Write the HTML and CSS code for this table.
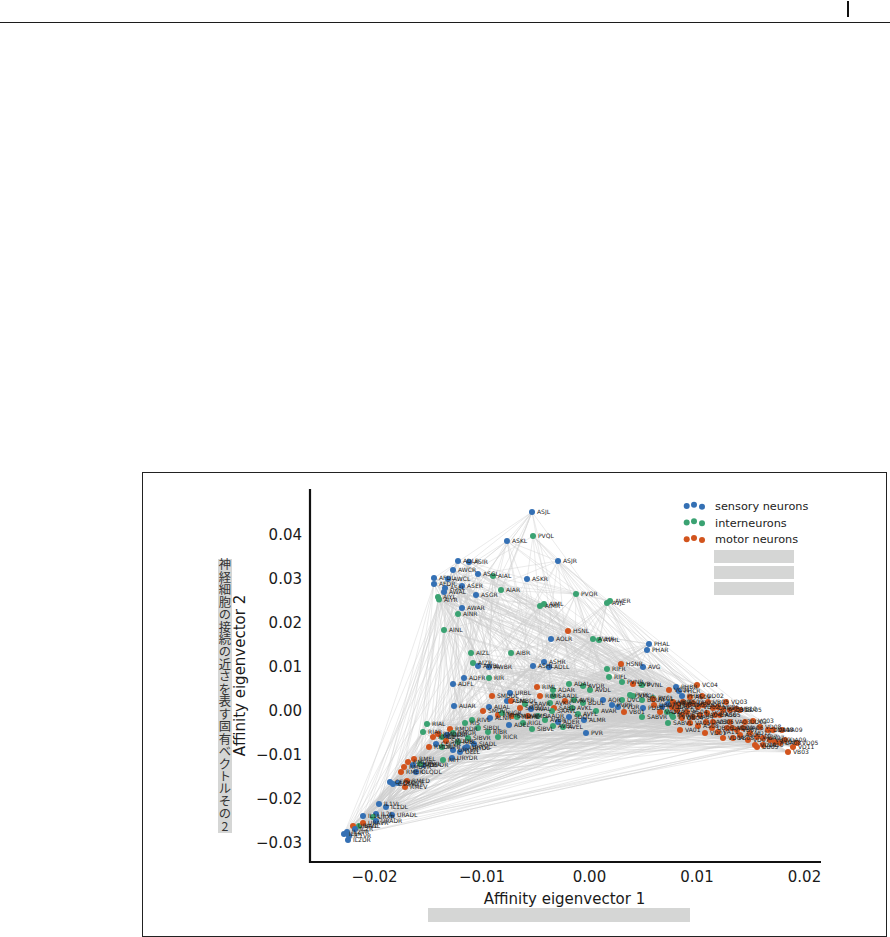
FILE: index.html
```html
<!DOCTYPE html>
<html lang="ja">
<head>
<meta charset="utf-8">
<title>Affinity eigenvectors</title>
<link rel="stylesheet" href="styles.css">
</head>
<body>
<header class="topbar"><span class="caret"></span></header>
<figure class="figure">
<svg id="plot" class="plot" viewBox="143 473 743 463" width="743" height="463" xmlns="http://www.w3.org/2000/svg">
  <g id="edges" class="edges"></g>
  <g id="nodes"></g>
  <g id="labels" class="nlabel"></g>
  <line class="axis" x1="310" y1="489" x2="310" y2="863"/>
  <line class="axis" x1="309" y1="862" x2="821" y2="862"/>
  <g class="tick ytick">
    <text x="302" y="540">0.04</text>
    <text x="302" y="584">0.03</text>
    <text x="302" y="628">0.02</text>
    <text x="302" y="672">0.01</text>
    <text x="302" y="716">0.00</text>
    <text x="302" y="760">−0.01</text>
    <text x="302" y="804">−0.02</text>
    <text x="302" y="848">−0.03</text>
  </g>
  <g class="tick xtick">
    <text x="374.5" y="882">−0.02</text>
    <text x="482" y="882">−0.01</text>
    <text x="589.5" y="882">0.00</text>
    <text x="697" y="882">0.01</text>
    <text x="804.5" y="882">0.02</text>
  </g>
  <text class="axlabel" x="564.5" y="903.5">Affinity eigenvector 1</text>
  <text class="axlabel" transform="translate(245 675.5) rotate(-90)">Affinity eigenvector 2</text>
  <rect class="mask" x="218" y="559" width="14" height="274"/>
  <text class="jp">
    <tspan x="225" y="569.3">神</tspan><tspan x="225" y="581.75">経</tspan><tspan x="225" y="594.2">細</tspan><tspan x="225" y="606.65">胞</tspan><tspan x="225" y="619.1">の</tspan><tspan x="225" y="631.55">接</tspan><tspan x="225" y="644">続</tspan><tspan x="225" y="656.45">の</tspan><tspan x="225" y="668.9">近</tspan><tspan x="225" y="681.35">さ</tspan><tspan x="225" y="693.8">を</tspan><tspan x="225" y="706.25">表</tspan><tspan x="225" y="718.7">す</tspan><tspan x="225" y="731.15">固</tspan><tspan x="225" y="743.6">有</tspan><tspan x="225" y="756.05">ベ</tspan><tspan x="225" y="768.5">ク</tspan><tspan x="225" y="780.95">ト</tspan><tspan x="225" y="793.4">ル</tspan><tspan x="225" y="805.85">そ</tspan><tspan x="225" y="818.3">の</tspan><tspan x="225" y="830.75">2</tspan>
  </text>
  <rect class="mask" x="428" y="908" width="262" height="14"/>
  <g class="legend">
    <circle class="c-s" cx="686.7" cy="506" r="3"/><circle class="c-s" cx="694" cy="504.7" r="3"/><circle class="c-s" cx="702" cy="506.7" r="3"/>
    <text x="715" y="510">sensory neurons</text>
    <circle class="c-i" cx="686.7" cy="522.6" r="3"/><circle class="c-i" cx="694" cy="521.3" r="3"/><circle class="c-i" cx="702" cy="523.3" r="3"/>
    <text x="715" y="526.5">interneurons</text>
    <circle class="c-m" cx="686.7" cy="539.2" r="3"/><circle class="c-m" cx="694" cy="537.9" r="3"/><circle class="c-m" cx="702" cy="539.9" r="3"/>
    <text x="715" y="543">motor neurons</text>
    <rect class="mask" x="714" y="550" width="80" height="13"/>
    <rect class="mask" x="714" y="566" width="80" height="13"/>
    <rect class="mask" x="714" y="582" width="80" height="13"/>
  </g>
</svg>
</figure>
<script src="script.js"></script>
</body>
</html>
```
FILE: styles.css
```css
html, body {
  margin: 0;
  padding: 0;
  background: #ffffff;
  font-family: "DejaVu Sans", "Noto Sans", sans-serif;
}

.topbar {
  height: 22px;
  border-bottom: 1px solid #1c1c1c;
  display: flex;
  justify-content: flex-end;
  align-items: flex-start;
}

.caret {
  display: block;
  width: 2px;
  height: 16px;
  margin: 1px 41px 0 0;
  background: #111111;
}

.figure {
  margin: 449px 0 0 142px;
  width: 743px;
  height: 463px;
  border: 1px solid #222222;
  overflow: hidden;
}

.plot {
  display: block;
}

.edges line {
  stroke: #cccccc;
  stroke-width: 0.5;
  stroke-opacity: 0.8;
}

.axis {
  stroke: #111111;
  stroke-width: 2.2;
}

.tick text {
  font-family: "DejaVu Sans", sans-serif;
  font-size: 15px;
  fill: #1a1a1a;
}

.ytick text {
  text-anchor: end;
}

.xtick text {
  text-anchor: middle;
}

.axlabel {
  font-family: "DejaVu Sans", sans-serif;
  font-size: 15px;
  fill: #1a1a1a;
  text-anchor: middle;
}

.mask {
  fill: #d5d6d5;
}

.jp {
  font-family: "Noto Sans CJK JP", "Noto Sans CJK SC", sans-serif;
  font-size: 12.3px;
  fill: #333333;
  text-anchor: middle;
}

.legend text {
  font-family: "DejaVu Sans", sans-serif;
  font-size: 11.3px;
  fill: #222222;
}

.c-s { fill: #3470b4; }
.c-i { fill: #3aa272; }
.c-m { fill: #d2541d; }

.nlabel text {
  font-family: "DejaVu Sans", sans-serif;
  font-size: 6px;
  fill: #1e1e1e;
}
```
FILE: script.js
```javascript
(function () {
  var data = [
    "s 532 512 ASJL","i 533 536 PVQL","s 507 541 ASKL","s 558 561 ASJR","s 458 561 ADLR",
    "s 469 562 ASIR","s 453 570 AWCR","s 478 574 ASGL","i 493 576 AIAL","s 527 579 ASKR",
    "s 434 578 AFDL","s 448 579 AWCL","s 434 584 AFDR","s 462 586 ASER","s 445 588 ASEL",
    "s 444 592 AWAL","i 438 597 AIYL","i 439 599.5 AIYR","s 476 595 ASGR","i 501 590 AIAR",
    "i 576 594 PVQR","i 610 601 AVER","i 607 603 AVJL","i 544 604 AIML","i 540 606 AIMR",
    "s 462 608 AWAR","i 458 614 AINR","i 444 630 AINL","m 568 631 HSNL","s 551 639 AOLR",
    "i 593 639 AVHR","i 599 640 AVHL","s 649 644 PHAL","s 647 650 PHAR",
    "i 471 653 AIZL","i 511 653 AIBR","i 473 663 AIZR","s 478 666 AWBL","s 489 667 AWBR",
    "s 544 662 ASHR","s 533 666 ASHL","s 549 667 ADLL","s 464 678 ADFR","i 489 678 RIR",
    "s 453 684 ADFL","m 621 664 HSNR","i 607 669 RIFR","s 643 667 AVG","i 609 677 RIFL",
    "i 569 684 ADAL","m 537 687 RIML","i 553 690 ADAR","m 492 696 SMDDL","s 510 693 URBL",
    "m 540 696 RIMR","i 553 696 SAADL","s 507 701 ALNL","m 511 701 SMBDL","i 525 704 SAAVR",
    "i 550 703 AVKR","m 554 708 SABD","i 572 708 AVKL","i 574 700 AVFR","i 583 703 BDUL",
    "s 603 700 AQR","s 454 706 AUAR","m 483 711 SMDVL","s 489 707 AUAL","i 472 720 RIVL",
    "s 490 718 ALNR","m 498 715 RMHR","i 502 713 RIGR","m 512 716 SMDVR","i 517 717 RMHL",
    "m 528 716 RMFL","s 509 725 ADEL","i 523 723 RIGL","i 552 711 SAAVL","i 578 714 AVFL",
    "s 584 720 ALMR","s 569 717 SDQL","s 558 722 ADER","i 563 727 AVEL","i 553 726 AVBL",
    "i 532 729 SIBVL","i 498 737 RICR","s 586 733 PVR","i 427 724 RIAL","i 423 732 RIAR",
    "i 465 723 RIS","m 450 729 RMDDR","i 453 733 RMGR","m 433 737 RMDL","i 442 737 RIPL",
    "s 447 735 OLLR","m 438 734 RMDDL","i 468 738 SIBVR","s 467 747 URYVL","m 429 747 RMDR",
    "i 442 747 RIPR","s 453 750 URYVR","s 460 752 OLLL","s 465 748 URYDL","m 414 759 RMEL",
    "s 423 765 CEPDR","i 443 760 RIH","s 452 758 URYDR","m 408 762 RMDVL","m 404 767 RMDVR",
    "m 401 772 RMER","s 416 772 OLQDL","s 413 765 CEPDL","i 420 764 URXL","s 390 782 CEPVL",
    "s 393 784 OLQVL","m 405 787 RMEV","m 407 781 RMED","s 398 783 OLQVR","s 379 804 IL1VL",
    "s 386 807 IL1DL","s 363 816 IL1L","s 376 814 IL2L","i 373 817 URXR","s 392 815 URADL",
    "s 376 821 URADR","m 353 826 URAVL","i 359 826 BAGL","m 363 823 URAVR","s 347 832 IL2VR",
    "s 344 834 IL1R","s 348 840 IL2DR","s 355 829 IL2R","s 349 836 IL1VR",
    "i 478 728 SIBDL","s 436 744 CEPVR","m 446 741 SMDDR","i 458 742 RIBL","s 474 744 SIADL",
    "i 488 732 RIBR","m 520 708 SMBVL","i 538 716 SAADR","s 531 709 AVAL","i 545 720 AVBR",
    "m 565 701 RIVR","i 596 711 AVAR","s 612 705 PVPR","i 590 690 AVDL","i 583 686 AVDR",
    "i 622 682 PVNR","m 633 684 DVB","i 642 685 PVNL","s 676 687 PHBR","m 697 685 VC04",
    "m 669 690 VC01","s 679 691 PHCR","s 682 696 PHBL","i 622 700 DVC","i 630 695 PVPL",
    "i 633 696 RMGL","i 642 700 BDUR","i 653 698 PVCL","i 670 703 PVCR","i 667 712 DVA",
    "i 642 717 SABVR","i 668 723 SABVL","i 672 715 PVT","i 673 717 PVWL","s 618 707 PVDR",
    "s 643 708 PDER","s 662 707 PVDL","s 668 704 PQR","m 624 712 VB01","m 653 699 AS01",
    "m 672 707 DA01","m 673 702 VB02","m 678 705 DB01","m 683 702 AS02","m 688 705 VA02",
    "m 693 703 DB02","m 698 707 VD02","m 703 705 DD01","m 708 702 VB05","m 713 708 DA02",
    "m 718 707 VD06","m 723 710 AS03","m 730 710 DB03","m 736 709 VB10","m 740 710 DD05",
    "m 677 710 VC02","m 682 715 VB11","m 687 712 AS04","m 693 717 VA04","m 700 715 DA04",
    "m 707 713 VC05","m 715 715 DA06","m 720 715 AS05","m 682 718 DB04","m 690 723 VA05",
    "m 680 730 VA01","m 705 733 VD01","m 706 722 DA03","m 713 722 VB06","m 730 722 VA03",
    "m 753 721 VC03","m 727 728 DA05","m 732 728 VD09","m 737 730 VB07","m 743 728 VA06",
    "m 760 727 VD08","m 768 730 DD04","m 773 730 VA08","m 782 730 VA09","m 723 738 VD04",
    "m 733 738 VB08","m 740 735 AS06","m 748 740 VD07","m 757 737 VA07","m 763 738 DA07",
    "m 770 740 VB09","m 775 742 AS07","m 755 745 VD10","m 757 747 DB05","m 763 745 VA10",
    "m 780 743 DA08","m 793 747 VD11","m 788 752 VB03","m 797 743 VD05","m 712 728 DB06",
    "m 698 726 AS08","m 718 732 VA11","m 745 722 DD03","m 750 733 VD12","m 785 740 DA09",
    "m 702 696 DD02","m 726 702 VD03","m 690 697 AS09","m 660 712 VA12","m 654 705 DB07"
  ];
  var cls = { s: "c-s", i: "c-i", m: "c-m" };
  var nodes = data.map(function (d) {
    var p = d.split(" ");
    return { t: p[0], x: parseFloat(p[1]), y: parseFloat(p[2]), n: p[3] };
  });
  var seed = 20240611;
  function rnd() {
    seed |= 0; seed = (seed + 0x6D2B79F5) | 0;
    var t = Math.imul(seed ^ (seed >>> 15), 1 | seed);
    t = (t + Math.imul(t ^ (t >>> 7), 61 | t)) ^ t;
    return ((t ^ (t >>> 14)) >>> 0) / 4294967296;
  }
  var n = nodes.length;
  var edges = [];
  function add(a, b) {
    edges.push('<line x1="' + a.x + '" y1="' + a.y + '" x2="' + b.x + '" y2="' + b.y + '"/>');
  }
  for (var i = 0; i < n; i++) {
    var a = nodes[i];
    var far = 2 + Math.floor(rnd() * 4);
    for (var e = 0; e < far; e++) {
      var j = Math.floor(rnd() * n);
      if (j !== i) add(a, nodes[j]);
    }
    var near = 0, tries = 0;
    while (near < 3 && tries < 60) {
      tries++;
      var m = Math.floor(rnd() * n);
      if (m === i) continue;
      var b = nodes[m];
      var dx = a.x - b.x, dy = a.y - b.y;
      if (dx * dx + dy * dy < 130 * 130) { add(a, b); near++; }
    }
  }
  document.getElementById("edges").innerHTML = edges.join("");
  document.getElementById("nodes").innerHTML = nodes.map(function (d) {
    return '<circle class="' + cls[d.t] + '" cx="' + d.x + '" cy="' + d.y + '" r="3"/>';
  }).join("");
  document.getElementById("labels").innerHTML = nodes.map(function (d) {
    return '<text x="' + (d.x + 5) + '" y="' + (d.y + 2.2) + '">' + d.n + '</text>';
  }).join("");
})();
```
